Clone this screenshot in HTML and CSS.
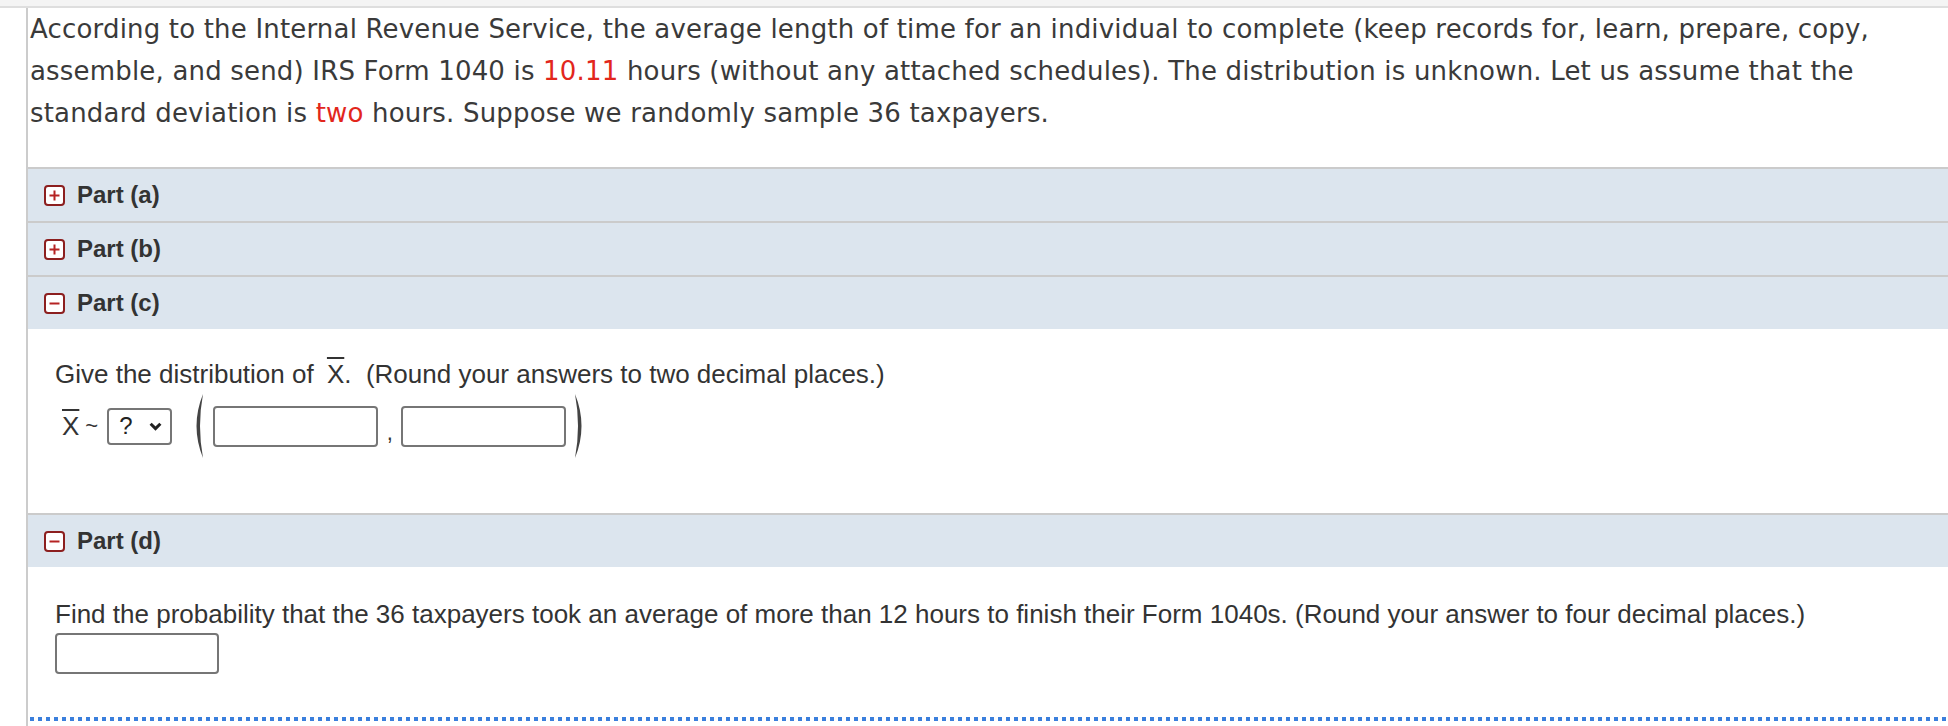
FILE: index.html
```html
<!DOCTYPE html>
<html>
<head>
<meta charset="utf-8">
<link rel="stylesheet" href="styles.css">
</head>
<body>
<div class="topbar"></div>
<div class="question">
  <p class="intro">According to the Internal Revenue Service, the average length of time for an individual to complete (keep records for, learn, prepare, copy, assemble, and send) IRS Form 1040 is <span class="red">10.11</span> hours (without any attached schedules). The distribution is unknown. Let us assume that the standard deviation is <span class="red">two</span> hours. Suppose we randomly sample 36 taxpayers.</p>

  <div class="part">
    <div class="part-head"><span class="toggle"><svg viewBox="0 0 21 21" width="21" height="21"><rect x="1" y="1" width="19" height="19" rx="3" fill="#fff" stroke="#8c1f1f" stroke-width="2"/><path d="M5.5 10.5h10M10.5 5.5v10" stroke="#b52323" stroke-width="2"/></svg></span>Part (a)</div>
  </div>
  <div class="part">
    <div class="part-head"><span class="toggle"><svg viewBox="0 0 21 21" width="21" height="21"><rect x="1" y="1" width="19" height="19" rx="3" fill="#fff" stroke="#8c1f1f" stroke-width="2"/><path d="M5.5 10.5h10M10.5 5.5v10" stroke="#b52323" stroke-width="2"/></svg></span>Part (b)</div>
  </div>
  <div class="part">
    <div class="part-head"><span class="toggle"><svg viewBox="0 0 21 21" width="21" height="21"><rect x="1" y="1" width="19" height="19" rx="3" fill="#fff" stroke="#8c1f1f" stroke-width="2"/><path d="M5.5 10.5h10" stroke="#b52323" stroke-width="2"/></svg></span>Part (c)</div>
    <div class="part-body part-c">
      <p class="prompt">Give the distribution of <span class="xbar">X</span>.&nbsp; (Round your answers to two decimal places.)</p>
      <div class="dist-row">
        <span class="xbar">X</span><span class="tilde">~</span>
        <span class="select">?<svg class="chev" viewBox="0 0 12 8" width="13" height="9"><path d="M1.5 1.5l4.5 4.5 4.5-4.5" fill="none" stroke="#222" stroke-width="2.8"/></svg></span>
        <svg class="paren lparen" viewBox="0 0 14 66" width="14" height="66"><path d="M13 1Q0 33 13 65Q7 33 13 1Z" fill="#444"/></svg>
        <span class="box"></span><span class="comma">,</span><span class="box"></span>
        <svg class="paren rparen" viewBox="0 0 14 66" width="14" height="66"><path d="M1 1Q14 33 1 65Q7 33 1 1Z" fill="#444"/></svg>
      </div>
    </div>
  </div>
  <div class="part">
    <div class="part-head"><span class="toggle"><svg viewBox="0 0 21 21" width="21" height="21"><rect x="1" y="1" width="19" height="19" rx="3" fill="#fff" stroke="#8c1f1f" stroke-width="2"/><path d="M5.5 10.5h10" stroke="#b52323" stroke-width="2"/></svg></span>Part (d)</div>
    <div class="part-body part-d">
      <p class="prompt">Find the probability that the 36 taxpayers took an average of more than 12 hours to finish their Form 1040s. (Round your answer to four decimal places.)</p>
      <span class="box"></span>
    </div>
  </div>
  <div class="dots"></div>
</div>
</body>
</html>
```

FILE: styles.css
```css
html, body {
  margin: 0;
  padding: 0;
  background: #fff;
}
body {
  font-family: "Liberation Sans", Arial, sans-serif;
  color: #333;
  height: 726px;
  overflow: hidden;
}
.topbar {
  height: 6px;
  background: #f4f4f4;
  border-bottom: 2px solid #dedede;
}
.question {
  margin-left: 26px;
  border-left: 2px solid #cccccc;
  height: 718px;
}
.intro {
  margin: 0;
  padding: 0 0 33px 2px;
  font-family: "DejaVu Sans", Verdana, sans-serif;
  font-size: 26px;
  letter-spacing: 0.18px;
  line-height: 42px;
  color: #3a3a3a;
}
.red {
  color: #e2261c;
}
.part-head {
  display: flex;
  align-items: center;
  gap: 12px;
  height: 52px;
  padding-left: 16px;
  background: #dce5ee;
  border-top: 2px solid #cbcbcb;
  font-weight: bold;
  font-size: 24px;
  color: #333;
}
.toggle {
  display: flex;
}
.part-body {
  padding-left: 27px;
}
.prompt {
  margin: 0;
  font-size: 26px;
  line-height: 36px;
  color: #333;
}
.part-c {
  padding-top: 27px;
  height: 184px;
  box-sizing: border-box;
}
.part-c .prompt .xbar {
  margin-left: 6px;
}
.xbar {
  text-decoration: overline;
  text-decoration-thickness: 2px;
}
.dist-row {
  display: flex;
  align-items: center;
  margin-top: 10px;
  height: 48px;
  font-size: 26px;
  color: #333;
  padding-left: 7px;
}
.tilde {
  margin: 0 9px 0 6px;
  font-size: 22px;
}
.select {
  display: inline-flex;
  align-items: center;
  justify-content: space-between;
  box-sizing: border-box;
  width: 65px;
  height: 37px;
  padding: 0 8px 0 10px;
  border: 2px solid #767676;
  border-radius: 4px;
  font-size: 24px;
  color: #222;
}
.lparen {
  margin: 0 9px 0 18px;
}
.rparen {
  margin: 0 0 0 8px;
}
.box {
  display: inline-block;
  box-sizing: border-box;
  width: 165px;
  height: 41px;
  border: 2px solid #767676;
  border-radius: 4px;
  background: #fff;
}
.comma {
  margin: 14px 0 0 0;
  width: 23px;
  text-align: center;
  font-size: 22px;
  line-height: 22px;
}
.part-d {
  padding-top: 29px;
  height: 150px;
  box-sizing: border-box;
}
.part-d .box {
  display: block;
  width: 164px;
  margin-top: 1px;
}
.dots {
  height: 4px;
  margin-left: 2px;
  background-image: repeating-linear-gradient(to right, #3b7fdc 0 4px, transparent 4px 8px);
}
```
